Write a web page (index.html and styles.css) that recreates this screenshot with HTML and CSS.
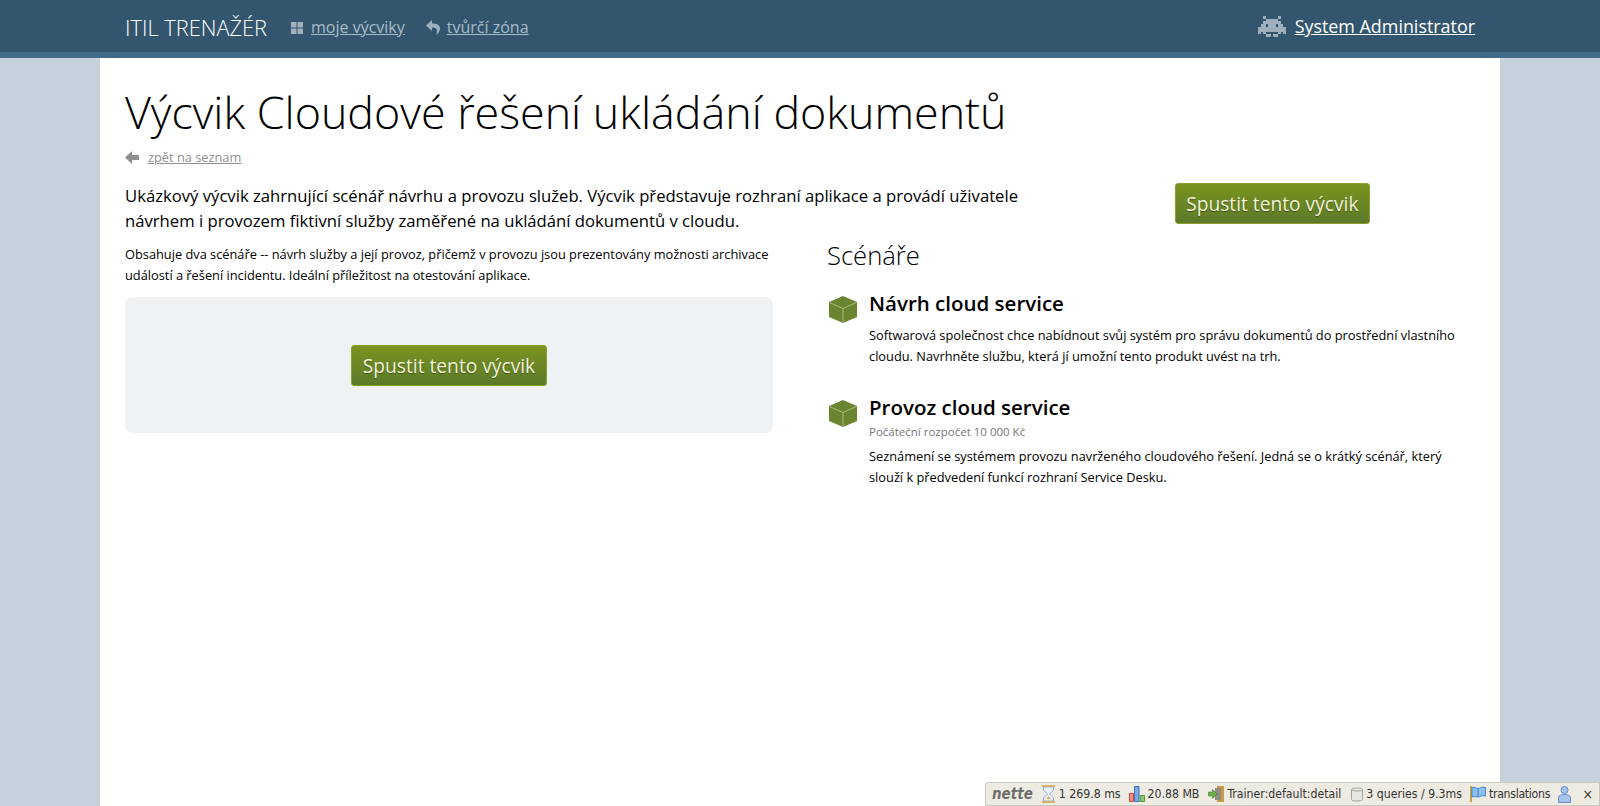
FILE: index.html
```html
<!DOCTYPE html>
<html lang="cs">
<head>
  <meta charset="UTF-8" />
  <title>Výcvik Cloudové řešení ukládání dokumentů</title>
  <link rel="stylesheet" href="styles.css">
</head>
<body>
  <nav class="navbar">
    <div class="navbar-inner">
      <a class="brand">ITIL TRENAŽÉR</a>
      <a class="nav-link">
        <svg class="nav-icon" viewBox="0 0 14 14" width="14" height="14"><path fill="#9fb0bc" d="M1 1h5.500v5.500H1zM7.500 1H13v5.500H7.500zM1 7.500h5.500V13H1zM7.500 7.500H13V13H7.500z"/></svg>
        <span>moje výcviky</span>
      </a>
      <a class="nav-link">
        <svg class="nav-icon" viewBox="0 0 14 15" width="14" height="15"><path fill="#9fb0bc" d="M6 0 0 5.500 6 11V7.500c3.500 0 5 1 5 3.500 0 1.500-.5 3-1 4 2.500-1.500 4-4 4-6.500C14 4.500 10 3.500 6 3.500z"/></svg>
        <span>tvůrčí zóna</span>
      </a>
      <a class="user-link">
        <svg class="user-icon" viewBox="0 0 11 8" width="28" height="21" shape-rendering="crispEdges"><path fill="#9fb0bc" d="M2 0h1v1H2zM8 0h1v1H8zM3 1h5v1H3zM2 2h7v1H2zM1 3h9v2H1zM0 4h1v3H0zM10 4h1v3h-1zM1 5h2v1H1zM8 5h2v1H8zM2 6h1v1H2zM8 6h1v1H8zM3 7h2v1H3zM6 7h2v1H6zM3 5h5v1H3z"/><path fill="#33566e" d="M3 3h1v1H3zM7 3h1v1H7z"/></svg>
        <span>System Administrator</span>
      </a>
    </div>
  </nav>

  <main class="container">
    <h1>Výcvik Cloudové řešení ukládání dokumentů</h1>
    <a class="back-link">
      <svg viewBox="0 0 14 13" width="14" height="13"><path fill="#8f8f8f" d="M7 0 0 6.500 7 13V9h7V4H7z"/></svg>
      <span>zpět na seznam</span>
    </a>

    <div class="intro">
      <p class="lead">Ukázkový výcvik zahrnující scénář návrhu a provozu služeb. Výcvik představuje rozhraní aplikace a provádí uživatele návrhem i provozem fiktivní služby zaměřené na ukládání dokumentů v cloudu.</p>
      <div class="intro-action"><a class="btn">Spustit tento výcvik</a></div>
    </div>

    <div class="columns">
      <section class="col-left">
        <p>Obsahuje dva scénáře -- návrh služby a její provoz, přičemž v provozu jsou prezentovány možnosti archivace událostí a řešení incidentu. Ideální příležitost na otestování aplikace.</p>
        <div class="well"><a class="btn">Spustit tento výcvik</a></div>
      </section>

      <section class="col-right">
        <h2>Scénáře</h2>
        <article class="scenario">
          <svg class="cube" viewBox="0 0 28 27" width="28" height="27"><path fill="#6b8430" d="M14 0 28 6v15l-14 6-14-6V6z"/><path fill="none" stroke="#a9bb7c" d="M.5 6.500 14 12.500l13.500-6M14 12.500V27"/></svg>
          <div class="scenario-body">
            <h3>Návrh cloud service</h3>
            <p>Softwarová společnost chce nabídnout svůj systém pro správu dokumentů do prostřední vlastního cloudu. Navrhněte službu, která jí umožní tento produkt uvést na trh.</p>
          </div>
        </article>
        <article class="scenario">
          <svg class="cube" viewBox="0 0 28 27" width="28" height="27"><path fill="#6b8430" d="M14 0 28 6v15l-14 6-14-6V6z"/><path fill="none" stroke="#a9bb7c" d="M.5 6.500 14 12.500l13.500-6M14 12.500V27"/></svg>
          <div class="scenario-body">
            <h3>Provoz cloud service</h3>
            <div class="budget">Počáteční rozpočet 10 000 Kč</div>
            <p>Seznámení se systémem provozu navrženého cloudového řešení. Jedná se o krátký scénář, který slouží k předvedení funkcí rozhraní Service Desku.</p>
          </div>
        </article>
      </section>
    </div>
  </main>

  <div class="debug-bar">
    <b class="debug-logo">nette</b>
    <span class="debug-item">
      <svg viewBox="0 0 15 18" width="15" height="18"><path fill="#eef3fb" stroke="#8fb0e0" d="M2.500 2h10v3L8.500 9l4 4v3h-10v-3l4-4-4-4z"/><path fill="#d9b26a" d="M1 0h13v2H1zM1 16h13v2H1zM5 14l2.500-3 2.500 3z"/></svg>1 269.8 ms
    </span>
    <span class="debug-item">
      <svg viewBox="0 0 16 16" width="16" height="16"><path fill="#ee8a80" stroke="#d0453c" d="M.5 7.500h4v8h-4z"/><path fill="#7aa7e6" stroke="#3f72c0" d="M5.500.5h4.500v15H5.500z"/><path fill="#8cc47a" stroke="#4f9a3c" d="M11 9.500h4.500v6H11z"/></svg>20.88 MB
    </span>
    <span class="debug-item debug-trainer">
      <svg viewBox="0 0 16 16" width="16" height="16"><path fill="#c89a4a" d="M9 0h7v16H9z"/><path fill="#8d8d80" d="M7 2h6v12H7z"/><path fill="#6fb04a" stroke="#3f7f2a" stroke-width=".6" d="M.5 6h4V3.500L9 8l-4.500 4.500V10h-4z"/></svg>Trainer:default:detail
    </span>
    <span class="debug-item debug-queries">
      <svg viewBox="0 0 12 15" width="12" height="15"><path fill="#e8e8e2" stroke="#a4a49e" d="M.5 2.500C.5.500 11.500.500 11.500 2.500v10c0 2-11 2-11 0z"/><path fill="none" stroke="#a4a49e" d="M.5 2.500c0 2 11 2 11 0"/></svg>3 queries / 9.3ms
    </span>
    <span class="debug-item debug-translations">
      <svg viewBox="0 0 16 16" width="16" height="16"><path fill="#c7a13c" d="M0 0h2v16H0z"/><path fill="#8cc0f0" stroke="#3f86d0" d="M2 1.500c3-1 4 1 6 1s3-2 7.500-1v8.500c-4.500-1-5.500 1-7.500 1s-3-1-6 0z"/><path fill="none" stroke="#3f86d0" d="M8 2.500v8.500"/></svg>translations
    </span>
    <svg class="debug-user" viewBox="0 0 13 17" width="13" height="17"><circle cx="6.500" cy="4" r="3.500" fill="#a9c4ec" stroke="#5f8ccc"/><path fill="#a9c4ec" stroke="#5f8ccc" d="M.5 16.500v-5c0-4 12-4 12 0v5z"/></svg>
    <span class="debug-close">×</span>
  </div>
</body>
</html>
```

FILE: styles.css
```css
* { box-sizing: border-box; }
html, body { height: 100%; }
body { margin: 0; background: #c5d1db; font-family: "Open Sans", sans-serif; font-size: 12.8px; line-height: 21px; color: #000; overflow: hidden; }
p { margin: 0; }

.navbar { height: 58px; background: #33566e; border-bottom: 6px solid #3f6b87; }
.navbar-inner { width: 1400px; margin: 0 auto; padding: 3px 25px 0; height: 52px; display: flex; align-items: center; }
.brand { color: #fff; font-size: 21.8px; font-weight: 300; margin-right: 23px; }
.nav-link { display: flex; align-items: center; gap: 7px; color: #a9bcc9; font-size: 16px; text-decoration: underline; margin-right: 21px; }
.nav-icon { flex: none; }
.user-link { margin-left: auto; margin-bottom: 2px; display: flex; align-items: center; gap: 9px; color: #fff; font-size: 17.9px; text-decoration: underline; }

.container { width: 1400px; height: calc(100% - 58px); margin: 0 auto; padding: 21px 25px 0; background: #fff; }
h1 { margin: 0; font-size: 44.8px; line-height: 66px; font-weight: 300; }
.back-link { display: flex; align-items: center; gap: 9px; margin-top: 2px; color: #909090; line-height: 20px; text-decoration: underline; }

.intro { display: flex; margin-top: 16px; }
.lead { width: 900px; font-size: 16.66px; line-height: 25px; }
.intro-action { flex: 1; padding-right: 105px; text-align: right; }
.btn { display: inline-block; padding: 0 10.5px; height: 41px; line-height: 39px; font-size: 19.2px; color: #f0f3d8; background: linear-gradient(#7b931f, #5b7a2a); border: 1px solid #8aa02a; border-radius: 3px; text-shadow: 0 1px 1px rgba(0, 0, 0, .35); white-space: nowrap; }

.columns { display: flex; margin-top: 11px; }
.col-left { width: 648px; margin-right: 54px; }
.well { height: 136px; margin-top: 11px; border-radius: 8px; background: #eef2f5; display: flex; align-items: center; justify-content: center; }
.col-right { flex: 1; margin-top: -6px; }
.col-right h2 { margin: 0; font-size: 25.6px; line-height: 36px; font-weight: 300; }

.scenario { display: flex; gap: 12px; margin-top: 14px; margin-bottom: 25px; }
.cube { flex: none; margin: 8px 0 0 2px; }
.scenario h3 { margin: 0; font-size: 20.5px; line-height: 30px; font-weight: 600; }
.budget { margin-top: 1px; color: #777; font-size: 11.5px; line-height: 17px; }
.scenario-body p { margin-top: 6px; }
.scenario-body h3 + p { margin-top: 7px; }

.debug-bar { position: fixed; right: 0; bottom: 0; height: 24px; width: 615px; padding: 0 6px; display: flex; align-items: center; gap: 8px; background: #eeebe2; border: 1px solid #c9c9c0; border-radius: 3px 0 0 0; font-family: "DejaVu Sans Condensed", "DejaVu Sans", sans-serif; font-size: 12.2px; line-height: 16px; color: #333; white-space: nowrap; }
.debug-logo { font-size: 15px; font-style: italic; font-weight: bold; color: #6e6e6e; }
.debug-item { display: flex; align-items: center; gap: 3px; }
.debug-trainer { margin-left: 1px; }
.debug-queries { margin-left: 2px; }
.debug-translations { letter-spacing: -.3px; }
.debug-close { margin-left: auto; font-size: 14px; }
```
